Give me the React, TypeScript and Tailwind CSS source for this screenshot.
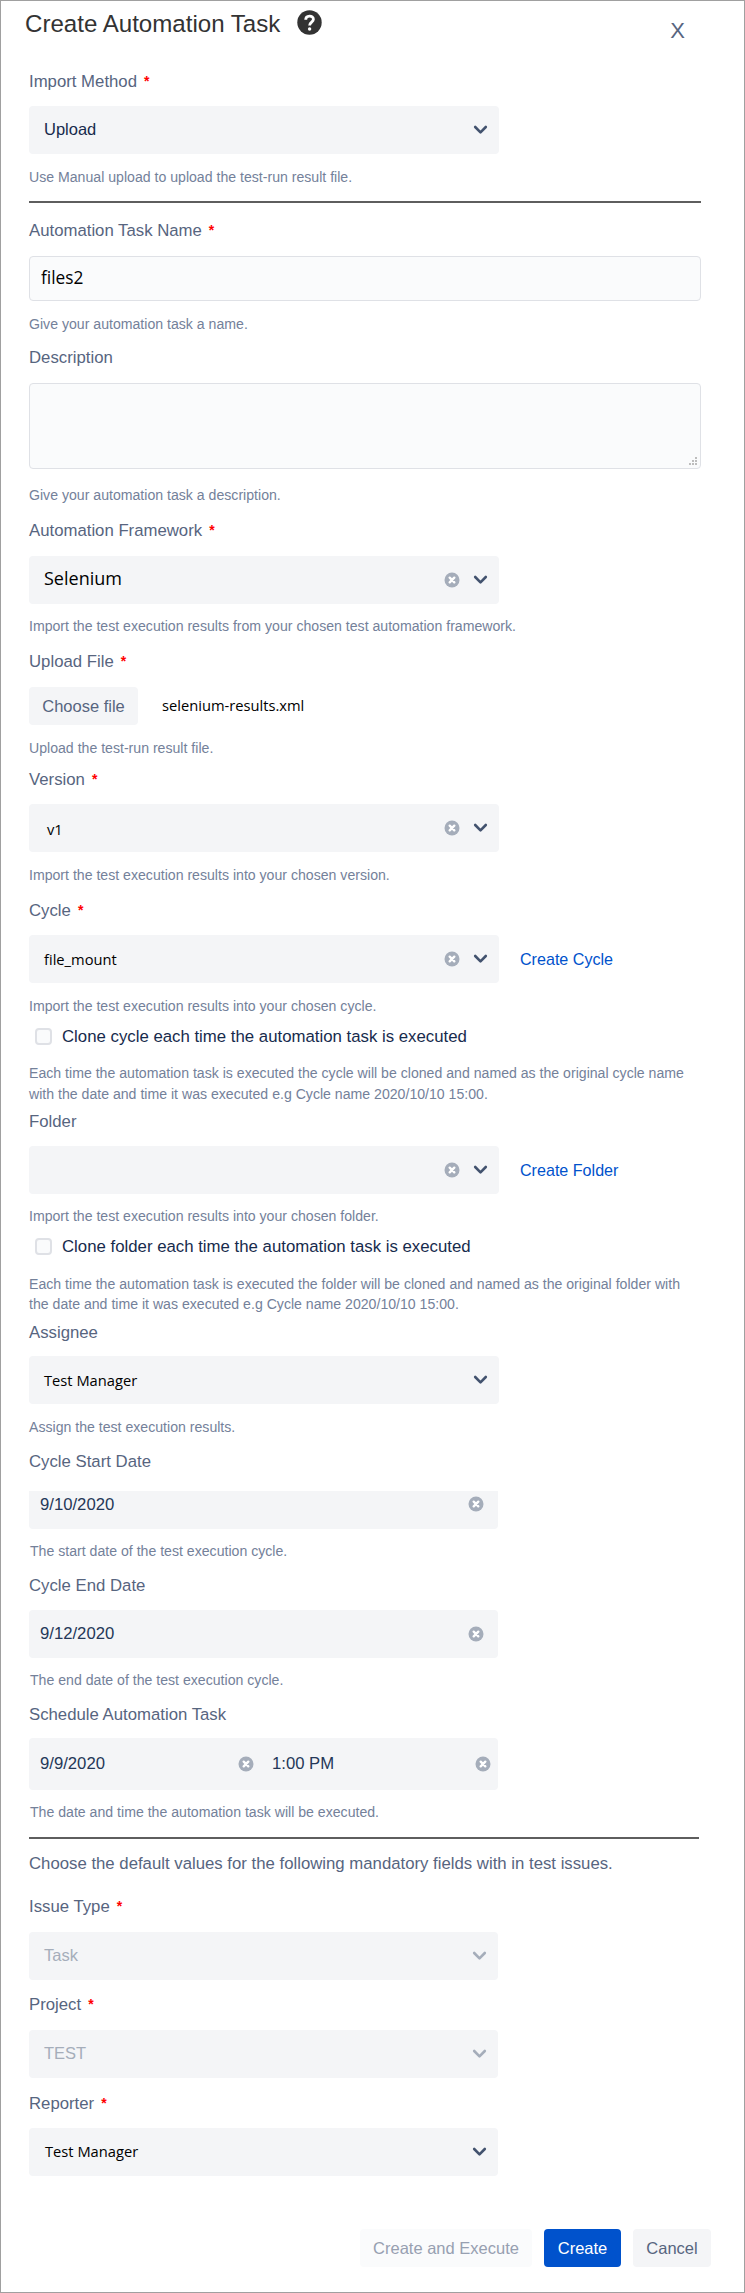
import { useState } from "react";
import clsx from "clsx";

const Label = ({ text, required, className }: { text: string; required?: boolean; className?: string }) => (
  <div className={clsx("flex h-5 items-start text-[16.75px] leading-[22px] whitespace-nowrap text-[#57657f]", className)}>
    <span>{text}</span>
    {required && <span className="ml-[7px] text-[14px] leading-[21px] font-bold text-[#f00]">*</span>}
  </div>
);

const Help = ({ children, className }: { children: React.ReactNode; className?: string }) => (
  <p className={clsx("text-[14.12px] whitespace-nowrap text-[#74819a]", className)}>{children}</p>
);

const Chevron = ({ className }: { className?: string }) => (
  <svg width="15" height="10" viewBox="0 0 15 10" fill="none" className={clsx("shrink-0", className)}>
    <path d="M2.2 2 L7.5 7.3 L12.8 2" stroke="currentColor" strokeWidth="2.6" strokeLinecap="round" strokeLinejoin="round" />
  </svg>
);

const ClearIcon = ({ className }: { className?: string }) => (
  <svg width="16" height="16" viewBox="0 0 16 16" className={clsx("shrink-0 text-[#a5adba]", className)}>
    <circle cx="8" cy="8" r="7.5" fill="currentColor" />
    <path d="M5.7 5.7 L10.3 10.3 M10.3 5.7 L5.7 10.3" stroke="#fff" strokeWidth="2.4" strokeLinecap="round" />
  </svg>
);

interface SelectBoxProps {
  value?: string;
  className?: string;
  valueClass?: string;
  clearable?: boolean;
  disabled?: boolean;
  narrow?: boolean;
}

const SelectBox = ({ value, className, valueClass, clearable, disabled, narrow }: SelectBoxProps) => (
  <div
    className={clsx(
      "flex h-12 shrink-0 items-center rounded-[4px] bg-[#f4f5f7] pr-[11px] pl-[15px]",
      narrow ? "w-[469px]" : "w-[470px]",
      className
    )}
  >
    <span className={clsx("flex-1 leading-5 whitespace-nowrap", valueClass)}>{value}</span>
    {clearable && <ClearIcon className="mr-[13px]" />}
    <Chevron className={disabled ? "text-[#a5adba]" : "text-[#42526e]"} />
  </div>
);

const CheckRow = ({ text, className }: { text: string; className?: string }) => {
  const [checked, setChecked] = useState(false);
  return (
    <label className={clsx("flex h-5 items-center", className)}>
      <input type="checkbox" className="sr-only" checked={checked} onChange={() => setChecked(!checked)} />
      <span className="ml-[6px] size-[17px] rounded-[4px] border-2 border-[#dfe1e6] bg-[#fafbfc]" />
      <span className="ml-[10px] pt-0.5 text-[16.8px] leading-5 whitespace-nowrap text-[#172b4d]">{text}</span>
    </label>
  );
};

export default function App() {
  const [name, setName] = useState("files2");
  const [description, setDescription] = useState("");

  return (
    <div className="h-[2293px] w-[745px] border border-[#a0a0a0] bg-white pl-7 font-['Liberation_Sans',Arial,sans-serif]">
      <header className="flex h-[59px] items-start">
        <h1 className="-ml-1 mt-[9px] text-[24.1px] leading-[28px] whitespace-nowrap text-[#333]">Create Automation Task</h1>
        <svg width="25" height="25" viewBox="0 0 25 25" className="mt-[9px] ml-[17px] shrink-0">
          <circle cx="12.5" cy="12.5" r="12.2" fill="#333" />
          <path d="M8.7 9.8 C8.7 4.9 16.4 4.9 16.4 9.3 C16.4 12 12.6 12.2 12.6 15.4" stroke="#fff" strokeWidth="2.8" fill="none" />
          <circle cx="12.6" cy="19" r="1.7" fill="#fff" />
        </svg>
        <button className="mt-[17px] mr-[59px] ml-auto text-[22px] leading-[26px] text-[#57657f]">X</button>
      </header>

      <Label text="Import Method" required className="mt-[11px]" />
      <SelectBox value="Upload" className="mt-[15px]" valueClass="pb-0.5 text-[16.5px] text-[#172b4d]" />
      <Help className="mt-[13px] leading-5">Use Manual upload to upload the test-run result file.</Help>
      <div className="mt-[14px] h-[2px] w-[672px] bg-[#5e5e5e]" />

      <Label text="Automation Task Name" required className="mt-[17px]" />
      <input
        value={name}
        onChange={(e) => setName(e.target.value)}
        className="mt-4 block h-[45px] w-[672px] rounded-[4px] border border-[#dfe1e6] bg-[#fafbfc] px-[11px] pb-0.5 font-['Open_Sans','Noto_Sans',sans-serif] text-[17.3px] text-black outline-none"
      />
      <Help className="mt-[13px] leading-5">Give your automation task a name.</Help>

      <Label text="Description" className="mt-[13px]" />
      <div className="relative mt-4 h-[86px] w-[672px]">
        <textarea
          value={description}
          onChange={(e) => setDescription(e.target.value)}
          className="block size-full resize-none rounded-[4px] border border-[#dfe1e6] bg-[#fafbfc] px-3 py-2 outline-none"
        />
        <svg width="9" height="9" viewBox="0 0 9 9" fill="#bdbdbd" className="absolute right-[3px] bottom-[3px]">
          <path d="M6 0h2v2h-2z M3 3h2v2h-2z M6 3h2v2h-2z M0 6h2v2h-2z M3 6h2v2h-2z M6 6h2v2h-2z" />
        </svg>
      </div>
      <Help className="mt-4 leading-5">Give your automation task a description.</Help>

      <Label text="Automation Framework" required className="mt-[15px]" />
      <SelectBox
        value="Selenium"
        clearable
        className="mt-4"
        valueClass="pb-1 font-['Open_Sans','Noto_Sans',sans-serif] text-[18px] text-black"
      />
      <Help className="mt-3 leading-5">Import the test execution results from your chosen test automation framework.</Help>

      <Label text="Upload File" required className="mt-[15px]" />
      <div className="mt-4 flex h-[38px] items-center">
        <button className="h-[38px] w-[109px] rounded-[4px] bg-[#f4f5f7] text-[16.5px] text-[#57657f]">Choose file</button>
        <span className="ml-6 pb-0.5 font-['Open_Sans','Noto_Sans',sans-serif] text-[14.7px] leading-5 text-black">
          selenium-results.xml
        </span>
      </div>
      <Help className="mt-[13px] leading-5">Upload the test-run result file.</Help>

      <Label text="Version" required className="mt-[11px]" />
      <SelectBox
        value="v1"
        clearable
        className="mt-[15px]"
        valueClass="pt-0.5 pl-[3px] font-['Open_Sans','Noto_Sans',sans-serif] text-[14.7px] text-black"
      />
      <Help className="mt-[13px] leading-5">Import the test execution results into your chosen version.</Help>

      <Label text="Cycle" required className="mt-[15px]" />
      <div className="mt-[15px] flex items-center">
        <SelectBox
          value="file_mount"
          clearable
          valueClass="font-['Open_Sans','Noto_Sans',sans-serif] text-[14.7px] text-black"
        />
        <a className="ml-[21px] text-[16.1px] leading-5 text-[#0052cc]">Create Cycle</a>
      </div>
      <Help className="mt-[13px] leading-5">Import the test execution results into your chosen cycle.</Help>
      <CheckRow text="Clone cycle each time the automation task is executed" className="mt-[10px]" />
      <Help className="mt-[17px] leading-[21px]">
        Each time the automation task is executed the cycle will be cloned and named as the original cycle name
        <br />
        with the date and time it was executed e.g Cycle name 2020/10/10 15:00.
      </Help>

      <Label text="Folder" className="mt-[6px]" />
      <div className="mt-[15px] flex items-center">
        <SelectBox clearable />
        <a className="ml-[21px] text-[16.1px] leading-5 text-[#0052cc]">Create Folder</a>
      </div>
      <Help className="mt-3 leading-5">Import the test execution results into your chosen folder.</Help>
      <CheckRow text="Clone folder each time the automation task is executed" className="mt-[10px]" />
      <Help className="mt-[18px] leading-5">
        Each time the automation task is executed the folder will be cloned and named as the original folder with
        <br />
        the date and time it was executed e.g Cycle name 2020/10/10 15:00.
      </Help>

      <Label text="Assignee" className="mt-2" />
      <SelectBox
        value="Test Manager"
        className="mt-[14px]"
        valueClass="font-['Open_Sans','Noto_Sans',sans-serif] text-[14.7px] text-black"
      />
      <Help className="mt-[13px] leading-5">Assign the test execution results.</Help>

      <Label text="Cycle Start Date" className="mt-[14px]" />
      <div className="mt-5 flex h-[38px] w-[469px] items-start rounded-b-[4px] bg-[#f4f5f7] pt-[3px] pr-[14px] pl-[11px]">
        <span className="flex-1 text-[16.7px] leading-[22px] text-[#253858]">9/10/2020</span>
        <ClearIcon className="mt-[2px]" />
      </div>
      <Help className="mt-3 pl-px leading-5">The start date of the test execution cycle.</Help>

      <Label text="Cycle End Date" className="mt-[14px]" />
      <div className="mt-[15px] flex h-12 w-[469px] items-center rounded-[4px] bg-[#f4f5f7] pr-[14px] pl-[11px]">
        <span className="flex-1 text-[16.7px] leading-5 text-[#253858]">9/12/2020</span>
        <ClearIcon />
      </div>
      <Help className="mt-3 pl-px leading-5">The end date of the test execution cycle.</Help>

      <Label text="Schedule Automation Task" className="mt-[14px]" />
      <div className="mt-[14px] flex h-[52px] w-[469px] items-center rounded-[4px] bg-[#f4f5f7] pr-[7px] pl-[11px]">
        <span className="w-[198px] text-[16.7px] leading-5 text-[#253858]">9/9/2020</span>
        <ClearIcon />
        <span className="ml-[18px] flex-1 text-[16.7px] leading-5 text-[#253858]">1:00 PM</span>
        <ClearIcon />
      </div>
      <Help className="mt-3 pl-px leading-5">The date and time the automation task will be executed.</Help>
      <div className="mt-[15px] h-[2px] w-[670px] bg-[#5e5e5e]" />

      <Label text="Choose the default values for the following mandatory fields with in test issues." className="mt-[14px]" />

      <Label text="Issue Type" required className="mt-[23px]" />
      <SelectBox value="Task" disabled narrow className="mt-4" valueClass="pb-0.5 text-[16.5px] text-[#a5adba]" />

      <Label text="Project" required className="mt-[14px]" />
      <SelectBox value="TEST" disabled narrow className="mt-4" valueClass="pb-0.5 text-[16.5px] text-[#a5adba]" />

      <Label text="Reporter" required className="mt-[15px]" />
      <SelectBox
        value="Test Manager"
        narrow
        className="mt-[15px]"
        valueClass="pb-0.5 pl-px font-['Open_Sans','Noto_Sans',sans-serif] text-[14.7px] text-black"
      />

      <footer className="mt-[53px] mr-[33px] flex justify-end gap-3 text-[16.5px]">
        <button disabled className="h-[38px] w-[172px] rounded-[4px] bg-[#fafbfc] whitespace-nowrap text-[#97a0b1]">
          Create and Execute
        </button>
        <button className="h-[38px] w-[77px] rounded-[4px] bg-[#0052cc] text-white">Create</button>
        <button className="h-[38px] w-[78px] rounded-[4px] bg-[#f4f5f7] text-[#57657f]">Cancel</button>
      </footer>
    </div>
  );
}
